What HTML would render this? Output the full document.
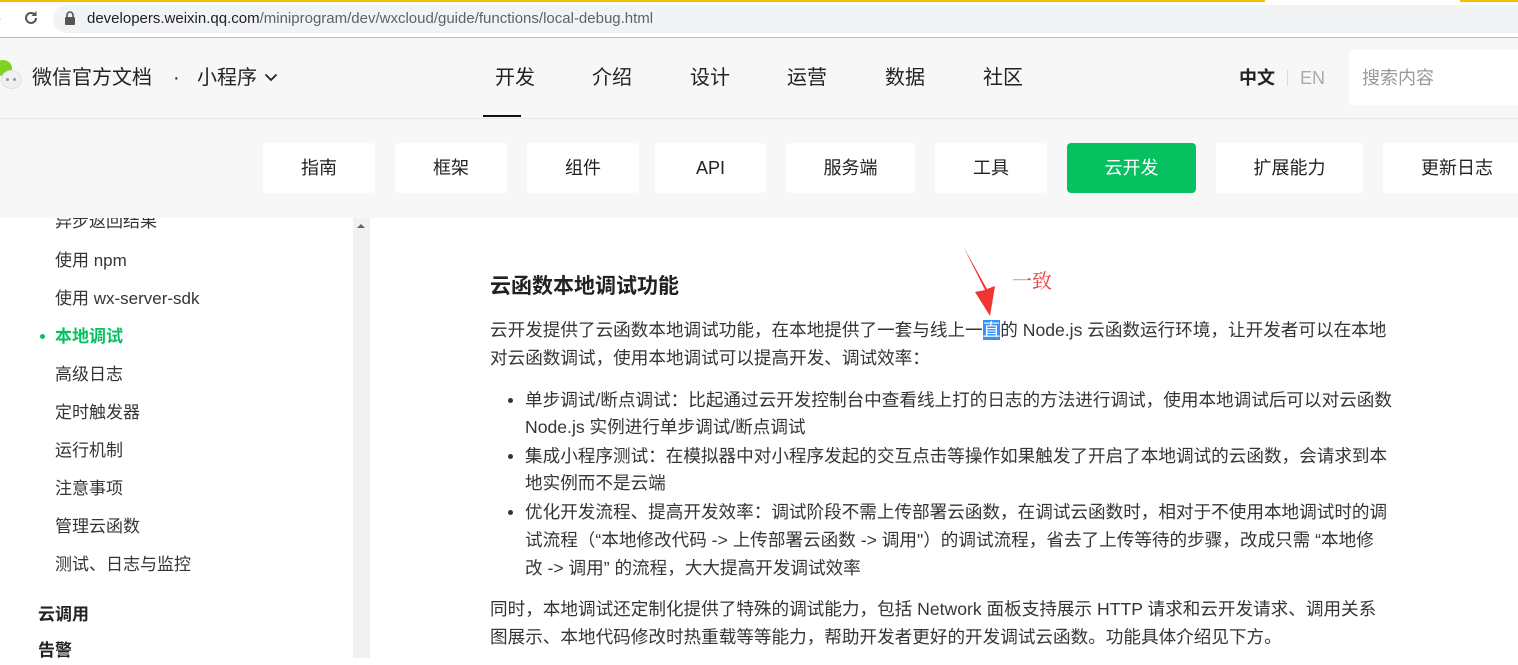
<!DOCTYPE html>
<html><head><meta charset="utf-8"><style>
*{margin:0;padding:0;box-sizing:border-box}
body{width:1518px;height:658px;overflow:hidden;position:relative;background:#fff;font-family:"Liberation Sans","Noto Sans CJK SC",sans-serif;color:#333}
.a{position:absolute;white-space:nowrap}
.t{font-size:17.6px;line-height:28px;color:#353535}
.s{font-size:17px;line-height:28px;color:#353535;left:55px}
.btn{position:absolute;top:143px;height:50px;background:#fff;border-radius:4px;font-size:18px;line-height:50px;text-align:center;color:#222}
.nav{position:absolute;top:64px;font-size:20px;line-height:28px;color:#222}
.dot{position:absolute;width:5px;height:5px;border-radius:50%;background:#333;left:508px}
</style></head><body>
<div class="a" style="left:0;top:0;width:1265px;height:2px;background:#f5bd00"></div>
<div class="a" style="left:1460px;top:0;width:58px;height:2px;background:#f5bd00"></div>
<div class="a" style="left:53px;top:5px;width:1465px;height:28px;background:#f1f3f4;border-radius:14px 0 0 14px"></div>
<div class="a" style="left:-4px;top:10px;color:#bbb;font-size:16px">›</div>
<svg class="a" style="left:22px;top:9px" width="18" height="18" viewBox="0 0 18 18"><path d="M14 9a5 5 0 1 1-1.5-3.6" fill="none" stroke="#555" stroke-width="2"/><path d="M14.5 2v5h-5z" fill="#555"/></svg>
<svg class="a" style="left:64px;top:11px" width="12" height="15" viewBox="0 0 12 15"><rect x="1" y="6" width="10" height="8" rx="1" fill="#555"/><path d="M3 6V4a3 3 0 0 1 6 0v2" fill="none" stroke="#555" stroke-width="1.6"/></svg>
<div class="a" style="left:87px;top:9px;font-size:15px;line-height:20px;color:#202124">developers.weixin.qq.com<span style="color:#5f6368">/miniprogram/dev/wxcloud/guide/functions/local-debug.html</span></div>
<div class="a" style="left:0;top:37px;width:1518px;height:1px;background:#bbb"></div>
<div class="a" style="left:0;top:38px;width:1518px;height:180px;background:#f7f7f7"></div>
<div class="a" style="left:0;top:118px;width:1518px;height:1px;background:#e7e7e7"></div>
<div class="a" style="left:-6px;top:60px;width:18px;height:16px;border-radius:50%;background:#7ed321"></div>
<div class="a" style="left:1px;top:70px;width:21px;height:19px;border-radius:50%;background:#eef0f2;border:1px solid #e0e0e0"></div>
<div class="a" style="left:6px;top:78px;width:3px;height:3px;border-radius:50%;background:#999"></div>
<div class="a" style="left:13px;top:78px;width:3px;height:3px;border-radius:50%;background:#999"></div>
<div class="a" style="left:32px;top:64px;font-size:20px;line-height:28px;color:#222">微信官方文档</div>
<div class="a" style="left:173px;top:64px;font-size:20px;line-height:28px;color:#222">·</div>
<div class="a" style="left:197px;top:64px;font-size:20px;line-height:28px;color:#222">小程序</div>
<svg class="a" style="left:264px;top:73px" width="14" height="9" viewBox="0 0 14 9"><path d="M1.5 1.5l5.5 5.5 5.5-5.5" fill="none" stroke="#222" stroke-width="1.8"/></svg>
<div class="nav" style="left:495px">开发</div>
<div class="a" style="left:483px;top:115px;width:38px;height:2px;background:#111"></div>
<div class="nav" style="left:592px">介绍</div>
<div class="nav" style="left:690px">设计</div>
<div class="nav" style="left:787px">运营</div>
<div class="nav" style="left:885px">数据</div>
<div class="nav" style="left:983px">社区</div>
<div class="a" style="left:1239px;top:65px;font-size:18px;line-height:26px;font-weight:bold;color:#222">中文</div>
<div class="a" style="left:1287px;top:70px;width:1px;height:16px;background:#ddd"></div>
<div class="a" style="left:1300px;top:65px;font-size:18px;line-height:26px;color:#aaa">EN</div>
<div class="a" style="left:1349px;top:50px;width:169px;height:55px;background:#fff;border-radius:4px 0 0 4px"></div>
<div class="a" style="left:1362px;top:65px;font-size:18px;line-height:26px;color:#999">搜索内容</div>
<div class="btn" style="left:263px;width:112px">指南</div>
<div class="btn" style="left:395px;width:112px">框架</div>
<div class="btn" style="left:527px;width:112px">组件</div>
<div class="btn" style="left:655px;width:111px">API</div>
<div class="btn" style="left:786px;width:129px">服务端</div>
<div class="btn" style="left:935px;width:112px">工具</div>
<div class="btn" style="left:1067px;width:129px;background:#07c160;color:#fff">云开发</div>
<div class="btn" style="left:1216px;width:147px">扩展能力</div>
<div class="btn" style="left:1383px;width:147px;text-align:left;padding-left:38px">更新日志</div>
<div class="a" style="left:0;top:218px;width:353px;height:440px;overflow:hidden">
<div class="a s" style="top:-10px">异步返回结果</div>
</div>
<div class="a" style="left:353px;top:218px;width:17px;height:440px;background:#f1f1f1"></div>
<svg class="a" style="left:356px;top:222px" width="10" height="8"><path d="M1 6h8L5 2z" fill="#666"/></svg>
<div class="a s" style="top:247px">使用 npm</div>
<div class="a s" style="top:285px">使用 wx-server-sdk</div>
<div class="a" style="left:40px;top:334px;width:5px;height:5px;border-radius:50%;background:#07c160"></div>
<div class="a s" style="top:323px;color:#07c160;font-weight:bold">本地调试</div>
<div class="a s" style="top:361px">高级日志</div>
<div class="a s" style="top:399px">定时触发器</div>
<div class="a s" style="top:437px">运行机制</div>
<div class="a s" style="top:475px">注意事项</div>
<div class="a s" style="top:513px">管理云函数</div>
<div class="a s" style="top:551px">测试、日志与监控</div>
<div class="a" style="left:38px;top:601px;font-size:17px;line-height:28px;font-weight:bold;color:#222">云调用</div>
<div class="a" style="left:38px;top:637px;font-size:17px;line-height:28px;font-weight:bold;color:#222">告警</div>
<div class="a" style="left:490px;top:272px;font-size:21px;line-height:30px;font-weight:bold;color:#222">云函数本地调试功能</div>
<div class="a t" style="left:490px;top:316px">云开发提供了云函数本地调试功能，在本地提供了一套与线上一<span style="background:#3390ff;color:#fff">直</span>的 Node.js 云函数运行环境，让开发者可以在本地</div>
<div class="a t" style="left:490px;top:344px">对云函数调试，使用本地调试可以提高开发、调试效率：</div>
<div class="dot" style="top:398px"></div>
<div class="a t" style="left:525px;top:386px">单步调试/断点调试：比起通过云开发控制台中查看线上打的日志的方法进行调试，使用本地调试后可以对云函数</div>
<div class="a t" style="left:525px;top:413px">Node.js 实例进行单步调试/断点调试</div>
<div class="dot" style="top:454px"></div>
<div class="a t" style="left:525px;top:442px">集成小程序测试：在模拟器中对小程序发起的交互点击等操作如果触发了开启了本地调试的云函数，会请求到本</div>
<div class="a t" style="left:525px;top:469px">地实例而不是云端</div>
<div class="dot" style="top:510px"></div>
<div class="a t" style="left:525px;top:498px">优化开发流程、提高开发效率：调试阶段不需上传部署云函数，在调试云函数时，相对于不使用本地调试时的调</div>
<div class="a t" style="left:525px;top:526px">试流程（“本地修改代码 -&gt; 上传部署云函数 -&gt; 调用"）的调试流程，省去了上传等待的步骤，改成只需 “本地修</div>
<div class="a t" style="left:525px;top:554px">改 -&gt; 调用” 的流程，大大提高开发调试效率</div>
<div class="a t" style="left:490px;top:595px">同时，本地调试还定制化提供了特殊的调试能力，包括 Network 面板支持展示 HTTP 请求和云开发请求、调用关系</div>
<div class="a t" style="left:490px;top:623px">图展示、本地代码修改时热重载等等能力，帮助开发者更好的开发调试云函数。功能具体介绍见下方。</div>
<svg class="a" style="left:955px;top:240px" width="50" height="80" viewBox="0 0 50 80"><path d="M8 6L30 50L20 52L35 76L40 46L32 49Z" fill="#f03535"/></svg>
<div class="a" style="left:1012px;top:266px;font-size:20px;line-height:28px;color:#f04040;font-family:'Noto Serif CJK SC',serif">一致</div>
</body></html>
